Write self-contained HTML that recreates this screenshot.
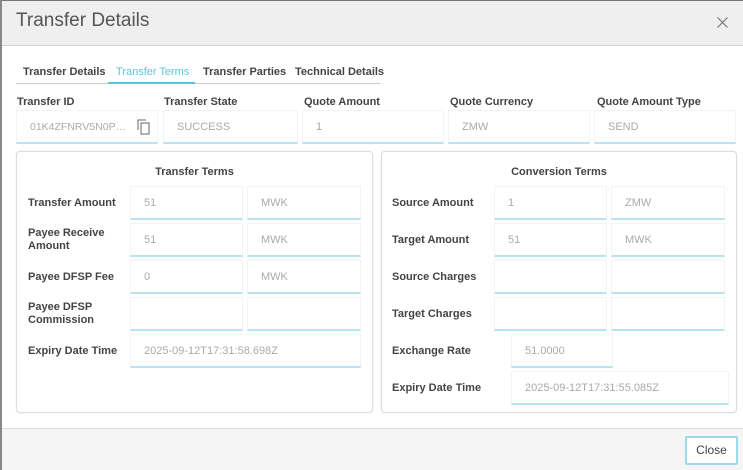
<!DOCTYPE html>
<html><head><meta charset="utf-8"><style>
*{box-sizing:border-box;margin:0;padding:0}
body{width:743px;height:470px;overflow:hidden;background:#fff;font-family:"Liberation Sans",sans-serif;position:relative}
.a{position:absolute}
.hdr{left:0;top:0;width:743px;height:46px;background:#efefef;border-bottom:1px solid #cfcfcf;border-top:1px solid #777}
.title{left:16px;top:10px;font-size:19px;color:#555}
.tab{top:66px;font-size:11px;color:#444;font-weight:bold}
.lbl{font-size:11px;color:#444;font-weight:bold;line-height:13px}
.in{background:#fff;border:1px solid #f3f3f3;border-bottom:2px solid #b8e3f0;height:34px;font-size:11px;color:#aaa;padding:0 0 0 13px;line-height:32px}
.pan{border:1px solid #ddd;border-radius:4px;background:#fff;box-shadow:0 0 2px rgba(0,0,0,.08)}
.pt{font-size:11px;color:#444;font-weight:bold;text-align:center}
.foot{left:0;top:428px;width:743px;height:42px;background:#f5f5f5;border-top:1px solid #ddd}
.btn{left:685px;top:436px;width:53px;height:29px;border:2px solid #9ed9ea;background:#fff;font-size:12px;color:#444;text-align:center;line-height:25px;border-radius:2px}
</style></head><body>
<div class="a" style="left:0;top:0;width:2px;height:470px;background:#888;z-index:5"></div>
<div class="a hdr"></div>
<div class="a title">Transfer Details</div>
<svg class="a" style="left:717px;top:17px" width="11" height="11" viewBox="0 0 11 11"><path d="M0.5 0.5L10.5 10.5M10.5 0.5L0.5 10.5" stroke="#777" stroke-width="1.2"/></svg>

<div class="a tab" style="left:23px">Transfer Details</div>
<div class="a tab" style="left:116px;color:#5bc4dd;font-weight:normal">Transfer Terms</div>
<div class="a tab" style="left:203px">Transfer Parties</div>
<div class="a tab" style="left:295px">Technical Details</div>
<div class="a" style="left:16px;top:83px;width:364px;height:1px;background:#ccc"></div>
<div class="a" style="left:108px;top:82px;width:87px;height:2px;background:#5bc4dd"></div>

<div class="a lbl" style="left:17px;top:96px">Transfer ID</div>
<div class="a lbl" style="left:164px;top:96px">Transfer State</div>
<div class="a lbl" style="left:304px;top:96px">Quote Amount</div>
<div class="a lbl" style="left:450px;top:96px">Quote Currency</div>
<div class="a lbl" style="left:597px;top:96px">Quote Amount Type</div>
<div class="a in" style="left:16px;top:110px;width:142px"><span style="display:inline-block;width:98px;overflow:hidden;white-space:nowrap;text-overflow:ellipsis;vertical-align:top;font-size:10.5px">01K4ZFNRV5N0P6K4XYZ</span>
<svg class="a" style="left:120px;top:8px" width="14" height="16" viewBox="0 0 14 16"><path d="M1 11V1h8" fill="none" stroke="#888" stroke-width="1.3"/><rect x="4" y="4" width="8" height="11" fill="none" stroke="#888" stroke-width="1.3"/></svg></div>
<div class="a in" style="left:163px;top:110px;width:135px">SUCCESS</div>
<div class="a in" style="left:302px;top:110px;width:142px">1</div>
<div class="a in" style="left:448px;top:110px;width:142px">ZMW</div>
<div class="a in" style="left:594px;top:110px;width:142px">SEND</div>

<div class="a pan" style="left:16px;top:151px;width:357px;height:262px"></div>
<div class="a pt" style="left:16px;top:166px;width:357px">Transfer Terms</div>
<div class="a lbl" style="left:28px;top:197px">Transfer Amount</div>
<div class="a in" style="left:130px;top:186px;width:113px">51</div>
<div class="a in" style="left:247px;top:186px;width:114px">MWK</div>
<div class="a lbl" style="left:28px;top:227px">Payee Receive<br>Amount</div>
<div class="a in" style="left:130px;top:223px;width:113px">51</div>
<div class="a in" style="left:247px;top:223px;width:114px">MWK</div>
<div class="a lbl" style="left:28px;top:271px">Payee DFSP Fee</div>
<div class="a in" style="left:130px;top:260px;width:113px">0</div>
<div class="a in" style="left:247px;top:260px;width:114px">MWK</div>
<div class="a lbl" style="left:28px;top:301px">Payee DFSP<br>Commission</div>
<div class="a in" style="left:130px;top:297px;width:113px"></div>
<div class="a in" style="left:247px;top:297px;width:114px"></div>
<div class="a lbl" style="left:28px;top:345px">Expiry Date Time</div>
<div class="a in" style="left:130px;top:334px;width:231px">2025-09-12T17:31:58.698Z</div>

<div class="a pan" style="left:381px;top:151px;width:356px;height:262px"></div>
<div class="a pt" style="left:381px;top:166px;width:356px">Conversion Terms</div>
<div class="a lbl" style="left:392px;top:197px">Source Amount</div>
<div class="a in" style="left:494px;top:186px;width:113px">1</div>
<div class="a in" style="left:611px;top:186px;width:114px">ZMW</div>
<div class="a lbl" style="left:392px;top:234px">Target Amount</div>
<div class="a in" style="left:494px;top:223px;width:113px">51</div>
<div class="a in" style="left:611px;top:223px;width:114px">MWK</div>
<div class="a lbl" style="left:392px;top:271px">Source Charges</div>
<div class="a in" style="left:494px;top:260px;width:113px"></div>
<div class="a in" style="left:611px;top:260px;width:114px"></div>
<div class="a lbl" style="left:392px;top:308px">Target Charges</div>
<div class="a in" style="left:494px;top:297px;width:113px"></div>
<div class="a in" style="left:611px;top:297px;width:114px"></div>
<div class="a lbl" style="left:392px;top:345px">Exchange Rate</div>
<div class="a in" style="left:511px;top:334px;width:102px">51.0000</div>
<div class="a lbl" style="left:392px;top:382px">Expiry Date Time</div>
<div class="a in" style="left:511px;top:371px;width:218px">2025-09-12T17:31:55.085Z</div>

<div class="a foot"></div>
<div class="a btn">Close</div>
</body></html>
